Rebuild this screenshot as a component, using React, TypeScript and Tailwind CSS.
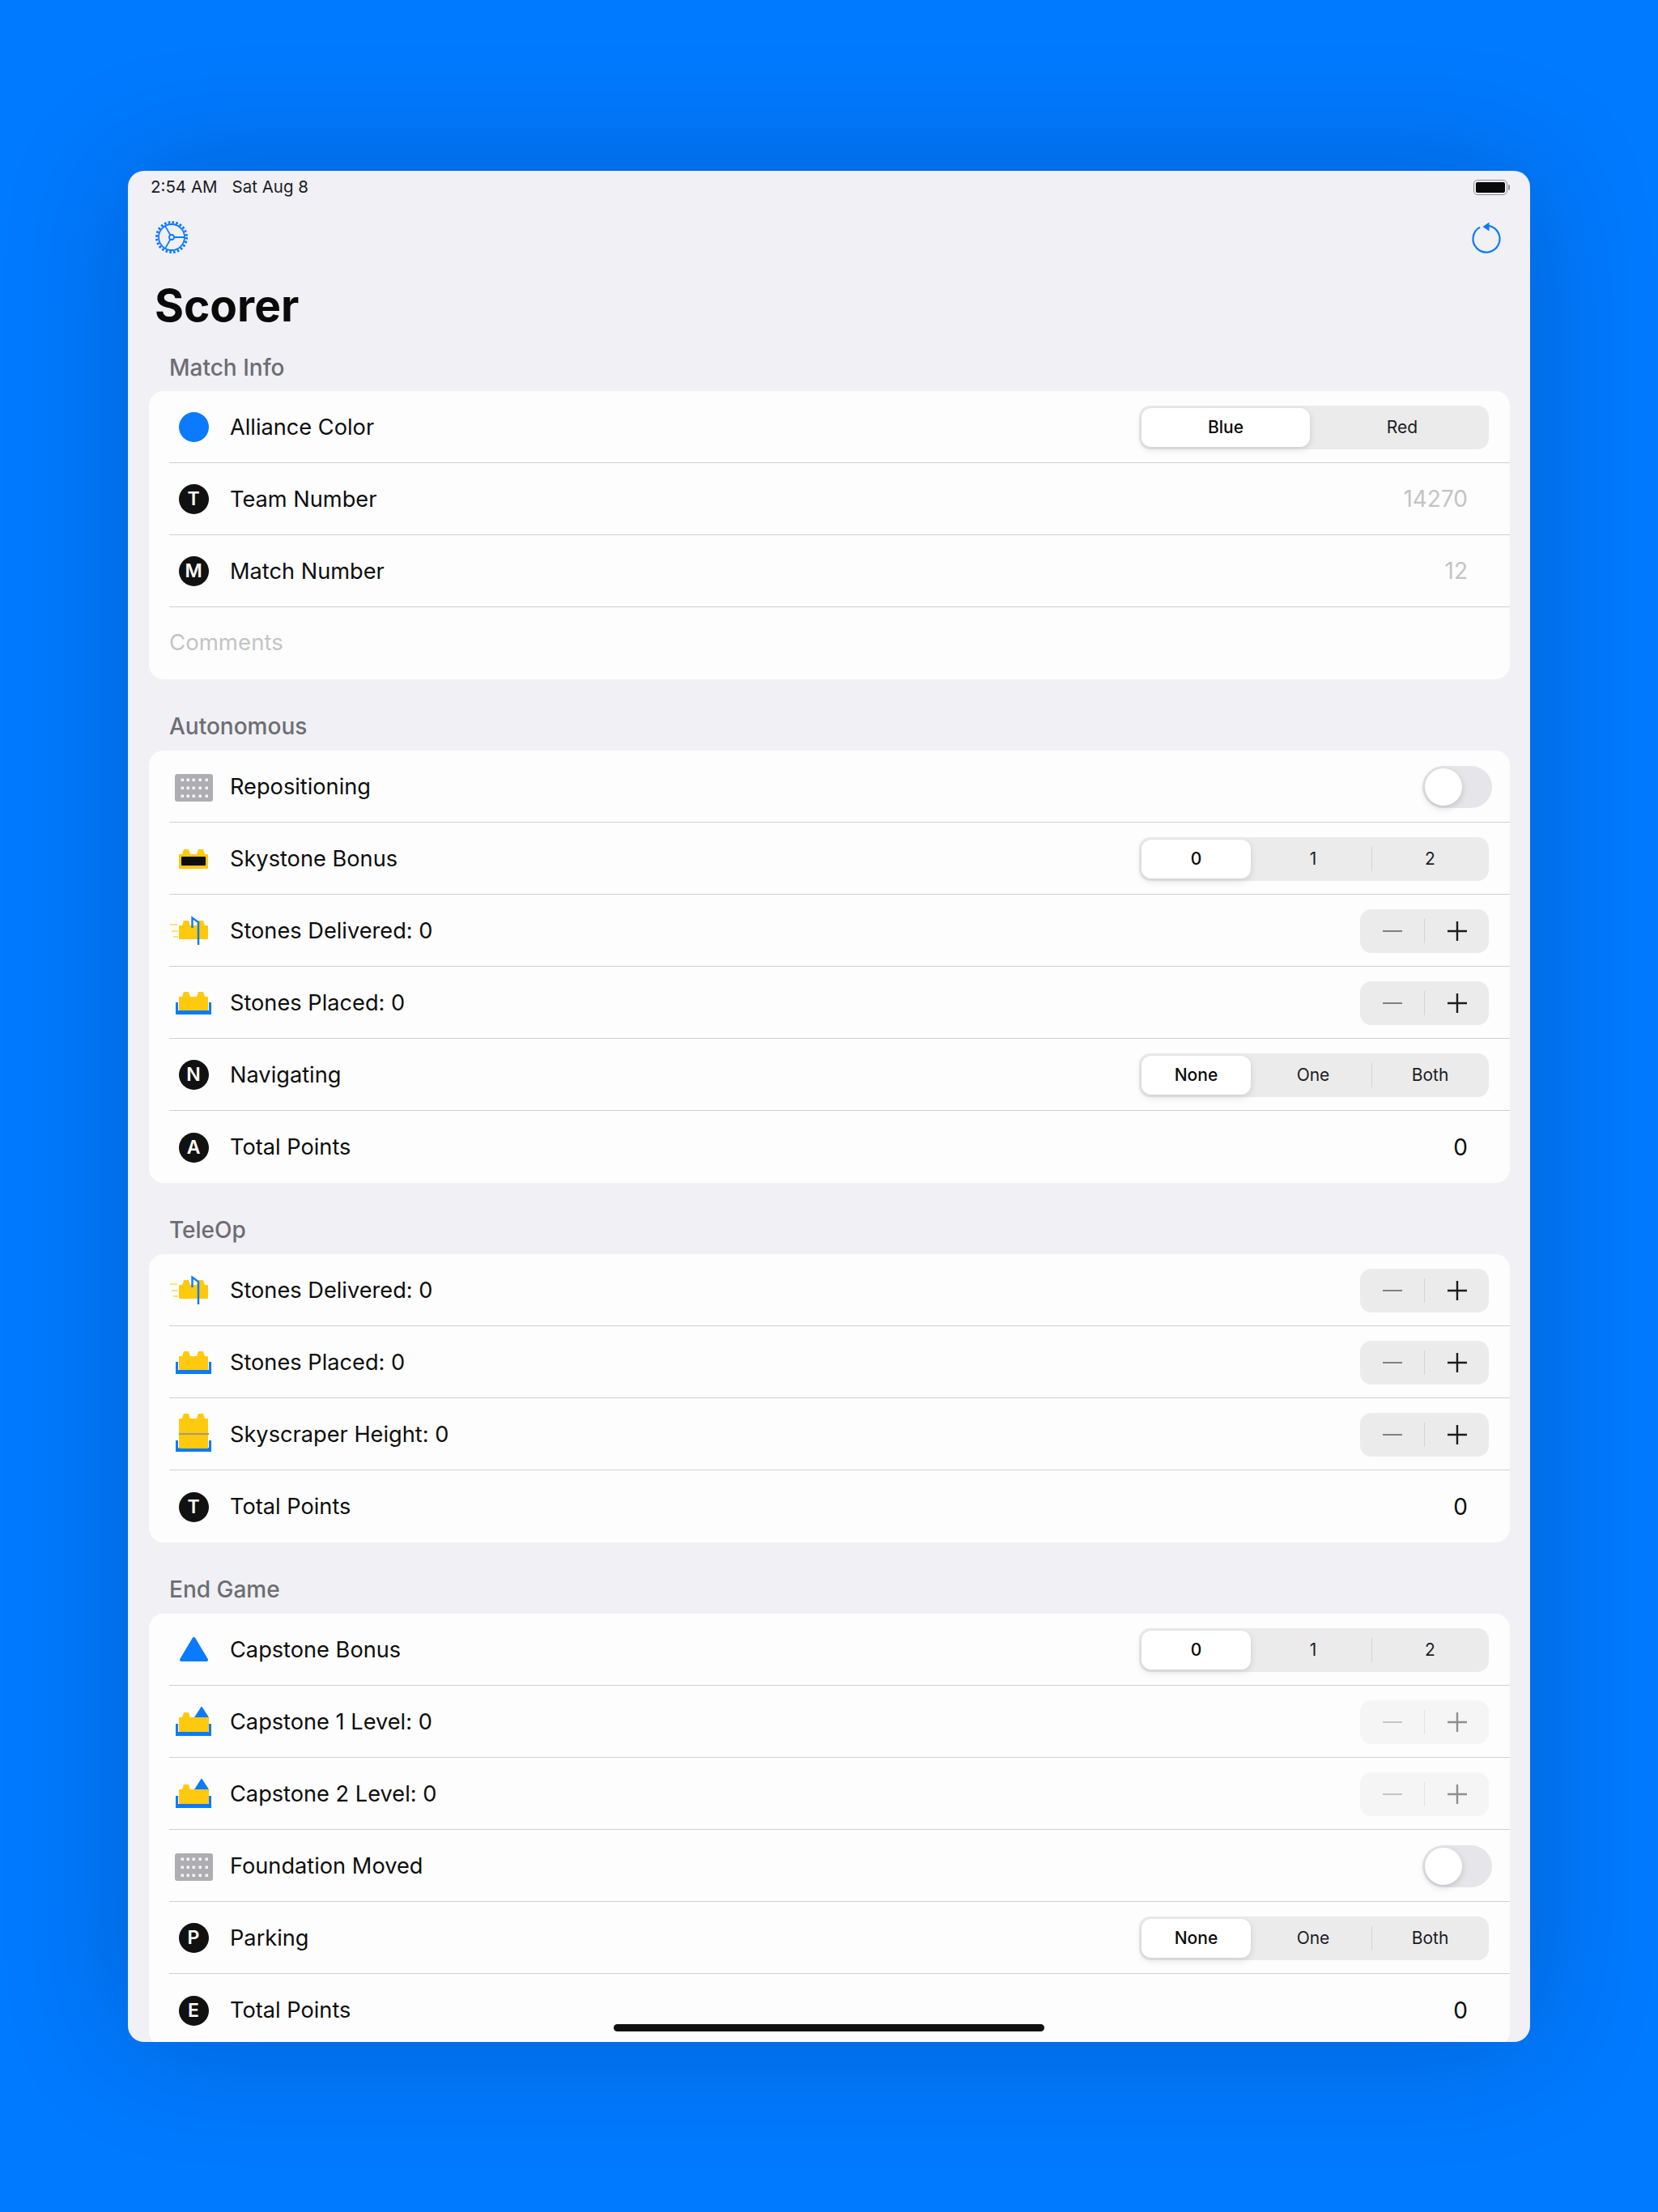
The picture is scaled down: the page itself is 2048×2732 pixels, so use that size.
import type { ReactNode } from 'react';

const BLUE = '#0a7aff';
const YELLOW = '#ffc90e';

// brick body with two studs, coordinates in the 60x60 icon box
function Brick({ top = 19, body = 25, bottom = 42 }: { top?: number; body?: number; bottom?: number }) {
  return (
    <path
      fill={YELLOW}
      d={`M12 ${bottom - 1}V${body + 1}q0-1 1-1h3l2-${body - top}h6l2 ${body - top}h8l2-${body - top}h6l2 ${body - top}h3q1 0 1 1V${bottom - 1}q0 1-1 1H13q-1 0-1-1z`}
    />
  );
}

function Tray({ top, bottom }: { top: number; bottom: number }) {
  return <path fill={BLUE} d={`M8 ${top}h3v${bottom - top - 5}h38V${top}h3v${bottom - top}H8z`} />;
}

function IconBox({ children }: { children: ReactNode }) {
  return (
    <svg viewBox="0 0 60 60" className="mt-[-1px] h-[60px] w-[60px] shrink-0">
      {children}
    </svg>
  );
}

function PlateIcon() {
  const xs = [16, 23, 30, 38, 46];
  const ys = [22, 32, 42];
  return (
    <IconBox>
      <rect x="7" y="15" width="47" height="34" rx="3" fill="#aeaeb2" />
      {ys.map((y) => xs.map((x) => <rect key={`${x}-${y}`} x={x - 1.5} y={y - 1.5} width="3.5" height="3.5" fill="#f4f4f6" />))}
    </IconBox>
  );
}

function SkystoneIcon() {
  return (
    <IconBox>
      <Brick top={19} body={25} bottom={43} />
      <rect x="15" y="28" width="30" height="11" rx="1" fill="#0d0d0d" />
    </IconBox>
  );
}

function DeliveredIcon() {
  return (
    <IconBox>
      <Brick top={18} body={24} bottom={41} />
      <path d="M1 23h9M3 31h8M5 38h6" stroke="#ffd659" strokeWidth="1.6" fill="none" />
      <path d="M36 48V20l-7.500-5.500V27" stroke={BLUE} strokeWidth="2.400" fill="none" />
    </IconBox>
  );
}

function PlacedIcon() {
  return (
    <IconBox>
      <Tray top={30} bottom={45} />
      <Brick top={17} body={23} bottom={40} />
    </IconBox>
  );
}

function SkyscraperIcon() {
  return (
    <IconBox>
      <Tray top={38} bottom={52} />
      <Brick top={5} body={11} bottom={48} />
      <rect x="12" y="29" width="37" height="2" fill="#a39a7c" />
    </IconBox>
  );
}

function TriangleIcon() {
  return (
    <IconBox>
      <path d="M30.500 17L46 43H15z" fill={BLUE} stroke={BLUE} strokeWidth="4" strokeLinejoin="round" />
    </IconBox>
  );
}

function CapstoneLevelIcon() {
  return (
    <IconBox>
      <Tray top={33} bottom={48} />
      <path d="M40 12L49 26H31z" fill={BLUE} stroke={BLUE} strokeWidth="1" strokeLinejoin="round" />
      <path
        fill={YELLOW}
        d="M12 42V26q0-1 1-1h3l2-6h6l2 6h23v17q0 1-1 1H13q-1 0-1-1z"
      />
    </IconBox>
  );
}

function LetterIcon({ letter }: { letter: string }) {
  return (
    <div className="flex h-[60px] w-[60px] shrink-0 items-center justify-center">
      <div className="flex h-[37px] w-[37px] items-center justify-center rounded-full bg-[#111111] text-[23px] font-semibold leading-none text-white">
        {letter}
      </div>
    </div>
  );
}

function BlueDot() {
  return (
    <div className="flex h-[60px] w-[60px] shrink-0 items-center justify-center">
      <div className="h-[37px] w-[37px] rounded-full bg-[#0a7aff]" />
    </div>
  );
}

function GearIcon() {
  return (
    <svg viewBox="0 0 44 44" className="h-[44px] w-[44px]">
      <circle cx="22" cy="22" r="18.500" fill="none" stroke={BLUE} strokeWidth="3" strokeDasharray="2.600 2.242" />
      <circle cx="22" cy="22" r="16" fill="#f0f0f5" stroke={BLUE} strokeWidth="1.800" />
      <path d="M25 22h13M20.500 19.400L14 8.100M20.500 24.600L14 35.900" stroke={BLUE} strokeWidth="1.800" fill="none" />
      <circle cx="22" cy="22" r="3" fill="none" stroke={BLUE} strokeWidth="1.800" />
    </svg>
  );
}

function ResetIcon() {
  return (
    <svg viewBox="0 0 44 44" className="h-[44px] w-[44px]">
      <path d="M25 7.800A16.500 16.500 0 1 1 14 9.600" fill="none" stroke={BLUE} strokeWidth="2.200" />
      <path d="M25.500 3.500v11l-8-5.500z" fill={BLUE} />
    </svg>
  );
}

function Battery() {
  return (
    <div className="flex items-center">
      <div className="h-[19px] w-[42px] rounded-[5px] border-[1.5px] border-[#8e8e93] p-[2px]">
        <div className="h-full w-full rounded-[2px] bg-[#0a0a0a]" />
      </div>
      <div className="ml-[1px] h-[7px] w-[2px] rounded-r-full bg-[#8e8e93]" />
    </div>
  );
}

function Segmented({ options }: { options: string[] }) {
  const three = options.length === 3;
  return (
    <div className="flex h-[54px] w-[432px] rounded-[14px] bg-[#ebebec] p-[3px]">
      <div
        className={`flex h-full shrink-0 items-center justify-center rounded-[12px] bg-white text-[21px] font-[450] text-[#0a0a0a] shadow-[0_3px_8px_rgba(0,0,0,0.13)] ${
          three ? 'w-[135px]' : 'w-[208px]'
        }`}
      >
        {options[0]}
      </div>
      {three ? (
        <>
          <div className="ml-[5px] flex w-[144px] shrink-0 items-center justify-center text-[21px] text-[#1c1c1e]">{options[1]}</div>
          <div className="relative flex w-[145px] shrink-0 items-center justify-center text-[21px] text-[#1c1c1e]">
            <div className="absolute left-0 top-[9px] h-[30px] w-px bg-[#d4d4d6]" />
            {options[2]}
          </div>
        </>
      ) : (
        <div className="flex flex-1 items-center justify-center pl-[10px] text-[21px] text-[#1c1c1e]">{options[1]}</div>
      )}
    </div>
  );
}

function Stepper({ disabled = false }: { disabled?: boolean }) {
  return (
    <div className={`flex h-[54px] w-[159px] items-center rounded-[14px] ${disabled ? 'bg-[#f5f5f6]' : 'bg-[#ebebec]'}`}>
      <div className="flex w-[79px] items-center justify-center">
        <svg viewBox="0 0 24 24" className="h-[24px] w-[24px]">
          <rect y="11" width="24" height="2" fill={disabled ? '#c6c6c8' : '#808084'} />
        </svg>
      </div>
      <div className={`h-[30px] w-px ${disabled ? 'bg-[#e2e2e4]' : 'bg-[#d4d4d6]'}`} />
      <div className="flex flex-1 items-center justify-center">
        <svg viewBox="0 0 24 24" className="h-[24px] w-[24px]">
          <path d="M0 12h24M12 0v24" stroke={disabled ? '#8e8e90' : '#1c1c1e'} strokeWidth="2.400" />
        </svg>
      </div>
    </div>
  );
}

function Toggle() {
  return (
    <div className="mr-[-4px] h-[52px] w-[86px] rounded-full bg-[#e5e5ea] p-[3px]">
      <div className="h-[46px] w-[46px] rounded-full bg-white shadow-[0_3px_8px_rgba(0,0,0,0.16)]" />
    </div>
  );
}

function Row({ icon, label, right, last }: { icon?: ReactNode; label: string; right?: ReactNode; last?: boolean }) {
  return (
    <div className="pl-[25px]">
      <div className={`flex h-[89px] items-center pr-[26px] pt-[1px] ${last ? '' : 'border-b border-[#d0d0d2]'}`}>
        {icon}
        <div className={`ml-[15px] flex-1 text-[27.2px] text-[#0d0d0d] ${last ? '' : 'pt-[2px]'}`}>{label}</div>
        {right}
      </div>
    </div>
  );
}

function Value({ text, muted }: { text: string; muted?: boolean }) {
  return <div className={`pr-[26px] text-[28px] ${muted ? 'pb-[2px] text-[#c4c4c6]' : 'text-[#0d0d0d]'}`}>{text}</div>;
}

function Section({ title, first, children }: { title: string; first?: boolean; children: ReactNode }) {
  return (
    <>
      <div className={`flex items-end pl-[51px] text-[28px] font-medium leading-[30px] text-[#6d6d72] ${first ? 'h-[62px] pb-[14px]' : 'h-[88px] pb-[15px]'}`}>
        {title}
      </div>
      <div className="ml-[26px] w-[1681px] rounded-[18px] bg-[#fdfdfd]">{children}</div>
    </>
  );
}

export default function App() {
  return (
    <div className="flex h-[2732px] w-[2048px] items-start bg-[#007aff] pl-[158px] pt-[211px] font-['Inter',sans-serif]">
      <div className="relative h-[2311px] w-[1732px] overflow-hidden rounded-[20px] bg-[#f0f0f5] shadow-[0_0_160px_rgba(0,0,0,0.2)]">
        <div className="flex h-[40px] items-center justify-between pl-[28px] pr-[25px] text-[20.5px] text-[#1c1c1e]">
          <div className="flex gap-[18px]">
            <span>2:54 AM</span>
            <span>Sat Aug 8</span>
          </div>
          <Battery />
        </div>
        <div className="flex h-[84px] items-center justify-between pl-[32px] pr-[32px]">
          <GearIcon />
          <ResetIcon />
        </div>
        <div className="flex h-[86px] items-center pb-[2px] pl-[33px] text-[55px] font-bold text-[#0a0a0a]">Scorer</div>

        <Section title="Match Info" first>
          <Row icon={<BlueDot />} label="Alliance Color" right={<Segmented options={['Blue', 'Red']} />} />
          <Row icon={<LetterIcon letter="T" />} label="Team Number" right={<Value text="14270" muted />} />
          <Row icon={<LetterIcon letter="M" />} label="Match Number" right={<Value text="12" muted />} />
          <div className="flex h-[89px] items-center pb-[2px] pl-[25px] text-[27.6px] text-[#c4c4c6]">Comments</div>
        </Section>

        <Section title="Autonomous">
          <Row icon={<PlateIcon />} label="Repositioning" right={<Toggle />} />
          <Row icon={<SkystoneIcon />} label="Skystone Bonus" right={<Segmented options={['0', '1', '2']} />} />
          <Row icon={<DeliveredIcon />} label="Stones Delivered: 0" right={<Stepper />} />
          <Row icon={<PlacedIcon />} label="Stones Placed: 0" right={<Stepper />} />
          <Row icon={<LetterIcon letter="N" />} label="Navigating" right={<Segmented options={['None', 'One', 'Both']} />} />
          <Row icon={<LetterIcon letter="A" />} label="Total Points" right={<Value text="0" />} last />
        </Section>

        <Section title="TeleOp">
          <Row icon={<DeliveredIcon />} label="Stones Delivered: 0" right={<Stepper />} />
          <Row icon={<PlacedIcon />} label="Stones Placed: 0" right={<Stepper />} />
          <Row icon={<SkyscraperIcon />} label="Skyscraper Height: 0" right={<Stepper />} />
          <Row icon={<LetterIcon letter="T" />} label="Total Points" right={<Value text="0" />} last />
        </Section>

        <Section title="End Game">
          <Row icon={<TriangleIcon />} label="Capstone Bonus" right={<Segmented options={['0', '1', '2']} />} />
          <Row icon={<CapstoneLevelIcon />} label="Capstone 1 Level: 0" right={<Stepper disabled />} />
          <Row icon={<CapstoneLevelIcon />} label="Capstone 2 Level: 0" right={<Stepper disabled />} />
          <Row icon={<PlateIcon />} label="Foundation Moved" right={<Toggle />} />
          <Row icon={<LetterIcon letter="P" />} label="Parking" right={<Segmented options={['None', 'One', 'Both']} />} />
          <Row icon={<LetterIcon letter="E" />} label="Total Points" right={<Value text="0" />} last />
        </Section>

        <div className="absolute bottom-[13px] left-[600px] h-[9px] w-[532px] rounded-full bg-[#111111]" />
      </div>
    </div>
  );
}
